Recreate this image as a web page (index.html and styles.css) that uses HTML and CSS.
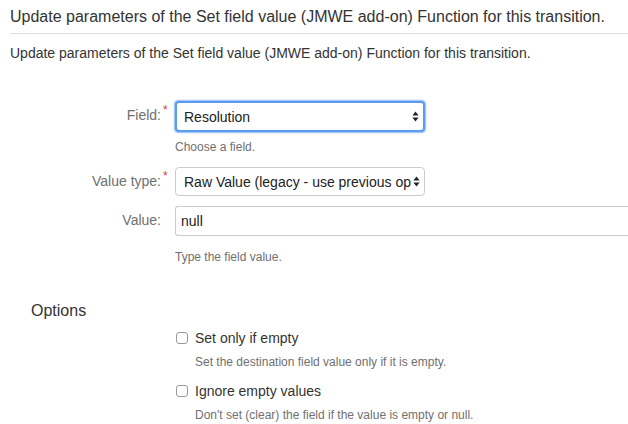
FILE: index.html
```html
<!DOCTYPE html>
<html>
<head>
<meta charset="utf-8">
<link rel="stylesheet" href="styles.css">
</head>
<body>
<div class="page">
  <h1 class="title">Update parameters of the Set field value (JMWE add-on) Function for this transition.</h1>
  <p class="intro">Update parameters of the Set field value (JMWE add-on) Function for this transition.</p>

  <form class="form">
    <div class="row row-field">
      <label class="label">Field:<span class="req">*</span></label>
      <div class="control">
        <div class="select focused"><span class="sel-text">Resolution</span><span class="arrows"><svg width="7" height="11" viewBox="0 0 7 11"><path d="M3.5 0.5 L6.6 4.5 H0.4 Z M3.5 10.5 L6.6 6.5 H0.4 Z" fill="#222"/></svg></span></div>
        <div class="help">Choose a field.</div>
      </div>
    </div>
    <div class="row">
      <label class="label">Value type:<span class="req">*</span></label>
      <div class="control">
        <div class="select"><span class="sel-text">Raw Value (legacy - use previous op</span><span class="arrows"><svg width="7" height="11" viewBox="0 0 7 11"><path d="M3.5 0.5 L6.6 4.5 H0.4 Z M3.5 10.5 L6.6 6.5 H0.4 Z" fill="#222"/></svg></span></div>
      </div>
    </div>
    <div class="row">
      <label class="label">Value:</label>
      <div class="control">
        <div class="input">null</div>
        <div class="help help-big">Type the field value.</div>
      </div>
    </div>

    <h2 class="options">Options</h2>

    <div class="check-row">
      <div class="check"><span class="box"></span><span class="check-label">Set only if empty</span></div>
      <div class="help check-help">Set the destination field value only if it is empty.</div>
    </div>
    <div class="check-row">
      <div class="check"><span class="box"></span><span class="check-label">Ignore empty values</span></div>
      <div class="help check-help">Don't set (clear) the field if the value is empty or null.</div>
    </div>
  </form>
</div>
</body>
</html>
```

FILE: styles.css
```css
html, body {
  margin: 0;
  padding: 0;
  background: #fff;
}
body {
  font-family: "Liberation Sans", Arial, sans-serif;
  color: #333;
  overflow: hidden;
  width: 628px;
  height: 424px;
}
.page {
  padding: 0 0 0 10px;
}
.title {
  margin: 0;
  padding: 9px 0 8px 0;
  font-size: 16px;
  font-weight: normal;
  line-height: 16px;
  color: #333;
  border-bottom: 1px solid #ddd;
  white-space: nowrap;
}
.intro {
  margin: 11px 0 0 0;
  font-size: 14px;
  line-height: 17px;
  color: #333;
}
.form {
  padding-top: 39px;
}
.row {
  display: flex;
  align-items: flex-start;
  margin-bottom: 10px;
}
.row-field {
  margin-bottom: 13px;
}
.label {
  position: relative;
  width: 151px;
  text-align: right;
  padding-top: 6px;
  font-size: 14px;
  line-height: 17px;
  color: #707070;
  flex: none;
}
.req {
  position: absolute;
  color: #d04437;
  font-size: 12px;
  top: 1px;
  margin-left: 2px;
}
.control {
  margin-left: 14px;
  flex: 1;
  min-width: 0;
}
.select {
  box-sizing: border-box;
  width: 250px;
  height: 29px;
  border: 1px solid #ccc;
  border-radius: 4px;
  display: flex;
  align-items: center;
  padding: 0 4px 0 8px;
  font-size: 14px;
  color: #222;
  background: #fff;
}
.select.focused {
  height: 31px;
  border: 2px solid #5b9cf2;
  box-shadow: 0 0 1.5px 0.5px #8dbcf6;
  border-radius: 4px;
  padding-left: 7px;
}
.sel-text {
  flex: 1;
  white-space: nowrap;
  overflow: hidden;
}
.arrows {
  display: flex;
  align-items: center;
  margin-left: 2px;
}
.input {
  box-sizing: border-box;
  height: 30px;
  width: 470px;
  border: 1px solid #ccc;
  border-right: none;
  border-radius: 3px 0 0 3px;
  display: flex;
  align-items: center;
  padding-left: 5px;
  font-size: 14px;
  color: #222;
}
.help {
  font-size: 12px;
  line-height: 14px;
  color: #707070;
  margin-top: 8px;
}
.help-big {
  margin-top: 14px;
}
.options {
  margin: 38px 0 0 21px;
  font-size: 16px;
  font-weight: normal;
  line-height: 18px;
  color: #333;
}
.check-row {
  margin-left: 165px;
  margin-top: 10px;
}
.check-row + .check-row {
  margin-top: 14px;
}
.check {
  display: flex;
  align-items: center;
  height: 16px;
}
.box {
  box-sizing: border-box;
  width: 12px;
  height: 12px;
  border: 1px solid #999;
  border-radius: 3px;
  background: #fff;
  margin-right: 7px;
  margin-left: 1px;
}
.check-label {
  font-size: 14px;
  color: #333;
}
.check-row .check-help {
  margin-top: 9px;
  padding-left: 20px;
}
```
